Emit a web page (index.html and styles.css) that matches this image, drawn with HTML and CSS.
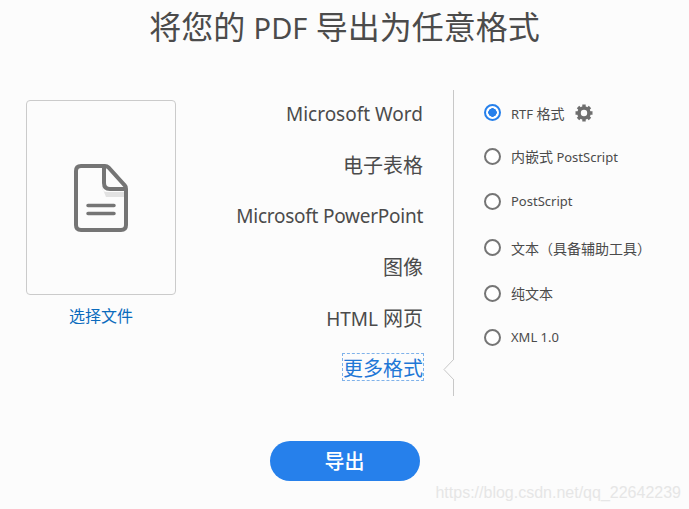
FILE: index.html
```html
<!DOCTYPE html>
<html lang="zh">
<head>
  <meta charset="UTF-8" />
  <title>导出 PDF</title>
  <link rel="stylesheet" href="styles.css">
</head>
<body>
  <h1 class="title">将您的 <span class="latin">PDF</span> 导出为任意格式</h1>

  <div class="main">
    <div class="picker">
      <div class="file-card">
        <svg class="file-icon" width="54" height="68" viewBox="0 0 54 68" fill="none">
          <path d="M28 22 q0 5 5 5 h20 v5 h-21 z" fill="#e2e2e2" transform="translate(0 1)"/>
          <path d="M7 2 H31 Q33 2 34.500 3.500 L50.500 21 Q52 22.500 52 25 V61 Q52 66 47 66 H7 Q2 66 2 61 V7 Q2 2 7 2 Z" stroke="#757575" stroke-width="4"/>
          <path d="M30 2.500 V19 Q30 25 36 25 H52" stroke="#757575" stroke-width="4"/>
          <path d="M14 41.500 H40 M14 49.500 H40" stroke="#757575" stroke-width="3.500" stroke-linecap="round"/>
        </svg>
      </div>
      <a class="pick-link">选择文件</a>
    </div>

    <ul class="formats">
      <li>Microsoft Word</li>
      <li class="zh">电子表格</li>
      <li class="tight">Microsoft PowerPoint</li>
      <li class="zh">图像</li>
      <li>HTML <span class="zh">网页</span></li>
      <li class="active"><span class="zh">更多格式</span></li>
    </ul>

    <div class="options">
      <svg class="notch" width="12" height="22" viewBox="0 0 12 22">
        <path d="M11 0 L1 10.500 L11 21" fill="#fcfcfc" stroke="#c8c8c8"/>
      </svg>
      <div class="option checked">
        <span class="radio"></span><span>RTF <span class="zh">格式</span></span>
        <svg class="gear" width="18" height="18" viewBox="0 0 18 18">
          <circle cx="9" cy="9" r="5" fill="none" stroke="#6e6e6e" stroke-width="3.600"/>
          <path d="M9 .5V4M9 14v3.500M.5 9H4M14 9h3.500M3 3l2.500 2.500M12.500 12.500L15 15M15 3l-2.500 2.500M5.500 12.500L3 15" stroke="#6e6e6e" stroke-width="3.400"/>
        </svg>
      </div>
      <div class="option"><span class="radio"></span><span><span class="zh">内嵌式</span> PostScript</span></div>
      <div class="option tall"><span class="radio"></span><span>PostScript</span></div>
      <div class="option taller"><span class="radio"></span><span class="zh">文本（具备辅助工具）</span></div>
      <div class="option"><span class="radio"></span><span class="zh">纯文本</span></div>
      <div class="option"><span class="radio"></span><span>XML 1.0</span></div>
    </div>
  </div>

  <div class="actions">
    <button class="export-btn">导出</button>
  </div>

  <div class="watermark">https://blog.csdn.net/qq_22642239</div>
</body>
</html>
```

FILE: styles.css
```css
html, body {
  height: 100%;
}

body {
  margin: 0;
  background: #fcfcfc;
  font-family: "Noto Sans", "Noto Sans CJK SC", sans-serif;
  color: #4b4b4b;
  overflow: hidden;
}

.title {
  margin: 0;
  height: 54px;
  line-height: 54px;
  font-size: 32px;
  font-weight: 400;
  text-align: center;
  color: #4b4b4b;
}

.title .latin {
  font-size: 29px;
}

.main {
  display: flex;
  align-items: flex-start;
  margin-top: 36px;
  height: 306px;
}

.picker {
  margin: 10px 0 0 26px;
  width: 150px;
  text-align: center;
}

.file-card {
  box-sizing: border-box;
  display: flex;
  align-items: center;
  justify-content: center;
  height: 195px;
  border: 1px solid #cbcbcb;
  border-radius: 4px;
}

.file-icon {
  display: block;
}

.pick-link {
  display: block;
  margin-top: 10px;
  font-size: 16px;
  line-height: 22px;
  color: #0b6bbd;
}

.formats {
  list-style: none;
  width: 247px;
  margin: 0;
  padding: 1px 0 0;
  text-align: right;
  font-size: 19px;
}

.formats li {
  height: 51px;
  line-height: 47px;
}

.formats .zh {
  font-size: 20px;
}

.formats .tight {
  letter-spacing: -0.25px;
}

.formats .active span {
  display: inline-block;
  height: 26px;
  margin-top: 8px;
  line-height: 30px;
  vertical-align: top;
  color: #1f77d6;
  outline: 1px dashed #7fb2ea;
}

.options {
  position: relative;
  box-sizing: border-box;
  height: 306px;
  margin-left: 30px;
  padding: 1px 0 0 30px;
  border-left: 1px solid #c8c8c8;
  font-size: 13px;
}

.options .zh {
  font-size: 14px;
}

.notch {
  position: absolute;
  left: -11px;
  top: 269px;
}

.option {
  display: flex;
  align-items: center;
  height: 44px;
  white-space: nowrap;
}

.option.checked {
  height: 43px;
}

.option.tall {
  height: 46px;
}

.option.taller {
  height: 47px;
}

.radio {
  box-sizing: border-box;
  width: 17px;
  height: 17px;
  margin-right: 10px;
  border: 2px solid #757575;
  border-radius: 50%;
  background: #fff;
}

.checked .radio {
  border-color: #2680eb;
  background: radial-gradient(circle, #2680eb 0 4px, #fff 4.500px);
}

.gear {
  margin-left: 11px;
}

.actions {
  display: flex;
  justify-content: center;
  margin-top: 45px;
}

.export-btn {
  width: 150px;
  height: 40px;
  padding: 0 0 2px;
  border: 0;
  border-radius: 20px;
  background: #2680eb;
  color: #fff;
  font-family: inherit;
  font-size: 20px;
  font-weight: 500;
}

.watermark {
  position: absolute;
  right: 8px;
  bottom: 7px;
  font-family: "Liberation Sans", sans-serif;
  font-size: 16px;
  color: #e6e6e6;
}
```
